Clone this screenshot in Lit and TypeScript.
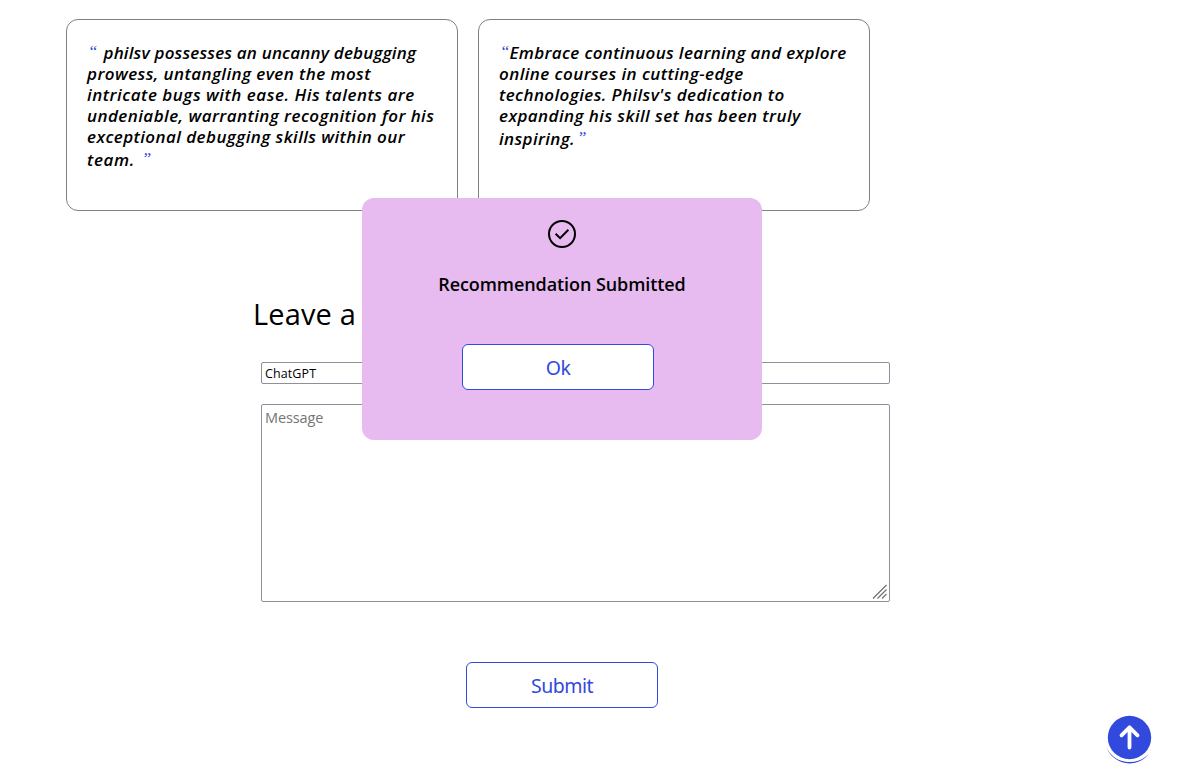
import { LitElement, html, css } from "lit";
import { customElement, property } from "lit/decorators.js";

interface Line {
  text: string;
  spacing: number;
}

interface Quote {
  lead: number;
  tail: number;
  lines: Line[];
}

const QUOTES: Quote[] = [
  {
    lead: 16.5,
    tail: 7,
    lines: [
      { text: "philsv possesses an uncanny debugging", spacing: 0.18 },
      { text: "prowess, untangling even the most", spacing: 0.42 },
      { text: "intricate bugs with ease. His talents are", spacing: 0.52 },
      { text: "undeniable, warranting recognition for his", spacing: 0.44 },
      { text: "exceptional debugging skills within our", spacing: 0.42 },
      { text: "team.", spacing: 0.6 },
    ],
  },
  {
    lead: 10.5,
    tail: 2,
    lines: [
      { text: "Embrace continuous learning and explore", spacing: 0.34 },
      { text: "online courses in cutting-edge", spacing: 0.43 },
      { text: "technologies. Philsv's dedication to", spacing: 0.41 },
      { text: "expanding his skill set has been truly", spacing: 0.43 },
      { text: "inspiring.", spacing: 0.38 },
    ],
  },
];

@customElement("quote-card")
class QuoteCard extends LitElement {
  @property({ attribute: false }) quote!: Quote;

  static styles = css`
    :host {
      display: block;
      box-sizing: border-box;
      width: 392px;
      height: 192px;
      padding: 22px 20px;
      border: 1px solid #808080;
      border-radius: 12px;
      background: #fff;
      font: italic 600 17px/21px "Open Sans", sans-serif;
    }
    .line {
      display: flex;
      height: 21px;
      white-space: nowrap;
    }
    .line:last-child {
      margin-top: 2px;
    }
    .mark {
      font: italic 400 17px/19px "Liberation Serif", serif;
      letter-spacing: 0;
      color: #3149dd;
    }
    .open {
      box-sizing: border-box;
      padding-left: 1px;
    }
  `;

  render() {
    const { lines, lead, tail } = this.quote;
    return lines.map(
      (line, i) => html`<div class="line" style="letter-spacing:${line.spacing}px">
        ${i === 0 ? html`<span class="mark open" style="width:${lead}px">“</span>` : ""}
        <span>${line.text}</span>
        ${i === lines.length - 1
          ? html`<span class="mark" style="margin-left:${tail}px">”</span>`
          : ""}
      </div>`
    );
  }
}

@customElement("app-root")
class AppRoot extends LitElement {
  static styles = css`
    :host {
      display: block;
      position: relative;
      box-sizing: border-box;
      height: 775px;
      padding-top: 19px;
      overflow: hidden;
      background: #fff;
      color: #000;
      font-family: "Open Sans", sans-serif;
    }
    .cards {
      display: flex;
      gap: 20px;
      padding-left: 66px;
    }
    .form {
      display: flex;
      flex-direction: column;
      width: 629px;
      margin: 83px 0 0 261px;
    }
    h2 {
      margin: 0 0 28px -8px;
      font-size: 29px;
      font-weight: 400;
      line-height: 40px;
      letter-spacing: 0.15px;
      white-space: nowrap;
    }
    input,
    textarea {
      display: block;
      box-sizing: border-box;
      width: 100%;
      margin: 0;
      border: 1px solid #8f8f9d;
      border-radius: 2px;
      background: #fff;
      color: #000;
      outline: none;
      resize: none;
      font-family: inherit;
    }
    input {
      height: 22px;
      padding: 1px 3px;
      font-size: 12.5px;
      letter-spacing: 0.1px;
    }
    .area {
      position: relative;
      height: 198px;
      margin-top: 20px;
    }
    textarea {
      height: 198px;
      padding: 3px;
      font-size: 14.5px;
      line-height: 20px;
      letter-spacing: -0.1px;
    }
    textarea::placeholder {
      color: #757575;
      opacity: 1;
    }
    .grip {
      position: absolute;
      right: 2px;
      bottom: 2px;
      width: 16px;
      height: 16px;
    }
    button {
      display: block;
      box-sizing: border-box;
      width: 192px;
      height: 46px;
      padding: 2px 0 0;
      border: 1px solid #3149dd;
      border-radius: 6px;
      background: #fff;
      color: #3149dd;
      font: 400 19.5px/42px "Noto Sans", sans-serif;
      letter-spacing: -0.5px;
    }
    .submit {
      margin: 60px 0 0 205px;
    }
    .modal {
      position: absolute;
      left: 362px;
      top: 198px;
      display: flex;
      flex-direction: column;
      align-items: center;
      box-sizing: border-box;
      width: 400px;
      height: 242px;
      padding-top: 22px;
      border-radius: 12px;
      background: #e8bbf0;
    }
    .check {
      width: 28px;
      height: 28px;
    }
    h3 {
      margin: 24px 0 0;
      font-size: 18px;
      font-weight: 650;
      line-height: 25px;
      letter-spacing: -0.08px;
    }
    .ok {
      margin: 47px 8px 0 0;
    }
    .top {
      position: absolute;
      right: 25px;
      bottom: 8px;
      width: 50px;
      height: 54px;
    }
  `;

  render() {
    return html`
      <section class="cards">
        ${QUOTES.map((q) => html`<quote-card .quote=${q}></quote-card>`)}
      </section>
      <section class="form">
        <h2>Leave a</h2>
        <input value="ChatGPT" />
        <div class="area">
          <textarea placeholder="Message"></textarea>
          <svg class="grip" viewBox="0 0 16 16" fill="none" stroke="#777" stroke-width="1.4">
            <path d="M1 14.500 14.500 1M5.500 14.500 14.500 5.500M10 14.500 14.500 10" />
          </svg>
        </div>
        <button class="submit">Submit</button>
      </section>
      <div class="modal">
        <svg class="check" viewBox="0 0 28 28" fill="none" stroke="#000" stroke-width="2">
          <circle cx="14" cy="14" r="13" />
          <path d="m7.600 13.800 4.500 4.400 8.300-8.400" />
        </svg>
        <h3>Recommendation Submitted</h3>
        <button class="ok">Ok</button>
      </div>
      <svg class="top" viewBox="0 0 50 54">
        <path d="M2 33A24.500 24.500 0 0 0 45.500 40A25 23.500 0 0 1 2 33Z" fill="#3149dd" />
        <circle cx="25.500" cy="24.500" r="21.700" fill="#3149dd" />
        <path
          d="M25.500 34.500V15M17.500 22.300l8-8 8 8"
          fill="none"
          stroke="#fff"
          stroke-width="3.800"
          stroke-linecap="round"
          stroke-linejoin="round"
        />
      </svg>
    `;
  }
}
